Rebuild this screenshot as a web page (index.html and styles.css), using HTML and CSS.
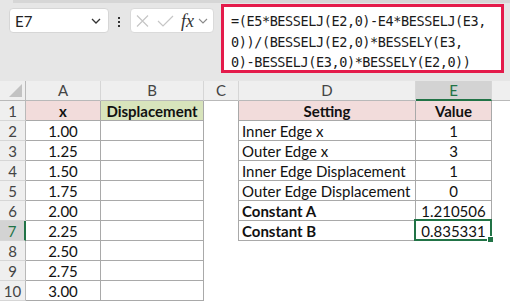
FILE: index.html
```html
<!DOCTYPE html>
<html>
<head>
<meta charset="utf-8">
<link rel="stylesheet" href="styles.css">
</head>
<body>
<div class="app">
  <div class="fbar">
    <div class="strip"></div>
    <div class="fbar-row">
      <div class="namebox">
        <span class="ref">E7</span>
        <svg class="chev" width="10" height="6" viewBox="0 0 10 6"><path d="M1 1 L5 5 L9 1" fill="none" stroke="#333" stroke-width="1.3"/></svg>
      </div>
      <div class="dots"><i></i><i></i><i></i></div>
      <div class="fxbox">
        <svg class="ic" width="13" height="12" viewBox="0 0 13 12"><path d="M1 0.5 L12 11.5 M12 0.5 L1 11.5" stroke="#c6c6c6" stroke-width="1.2" fill="none"/></svg>
        <svg class="ic ok" width="17" height="12" viewBox="0 0 17 12"><path d="M1 6 L6 11 L16 1" stroke="#c6c6c6" stroke-width="1.2" fill="none"/></svg>
        <span class="fx">fx</span>
        <svg class="chev2" width="10" height="6" viewBox="0 0 10 6"><path d="M1 1 L5 5 L9 1" fill="none" stroke="#8a8a8a" stroke-width="1.1"/></svg>
      </div>
      <div class="formula">=(E5*BESSELJ(E2,0)-E4*BESSELJ(E3,<br>0))/(BESSELJ(E2,0)*BESSELY(E3,<br>0)-BESSELJ(E3,0)*BESSELY(E2,0))</div>
    </div>
  </div>
  <div class="sheet">
    <div class="ch corner"><svg width="13" height="13" viewBox="0 0 13 13"><polygon points="13,0 13,13 0,13" fill="#c2c2c2"/></svg></div>
    <div class="ch">A</div><div class="ch">B</div><div class="ch">C</div><div class="ch">D</div><div class="ch selc">E</div><div class="ch last"></div>

    <div class="rh">1</div><div class="c t ctr pink b">x</div><div class="c t ctr green b">Displacement</div><div class="c lb"></div><div class="c t ctr pink b">Setting</div><div class="c t ctr pink b">Value</div><div class="c"></div>
    <div class="rh">2</div><div class="c t ctr">1.00</div><div class="c t"></div><div class="c lb"></div><div class="c t">Inner Edge x</div><div class="c t ctr">1</div><div class="c"></div>
    <div class="rh">3</div><div class="c t ctr">1.25</div><div class="c t"></div><div class="c lb"></div><div class="c t">Outer Edge x</div><div class="c t ctr">3</div><div class="c"></div>
    <div class="rh">4</div><div class="c t ctr">1.50</div><div class="c t"></div><div class="c lb"></div><div class="c t">Inner Edge Displacement</div><div class="c t ctr">1</div><div class="c"></div>
    <div class="rh">5</div><div class="c t ctr">1.75</div><div class="c t"></div><div class="c lb"></div><div class="c t">Outer Edge Displacement</div><div class="c t ctr">0</div><div class="c"></div>
    <div class="rh">6</div><div class="c t ctr">2.00</div><div class="c t"></div><div class="c lb"></div><div class="c t b">Constant A</div><div class="c t ctr">1.210506</div><div class="c"></div>
    <div class="rh selr">7</div><div class="c t ctr">2.25</div><div class="c t"></div><div class="c lb"></div><div class="c t b">Constant B</div><div class="c t ctr active">0.835331<span class="handle"></span></div><div class="c"></div>
    <div class="rh">8</div><div class="c t ctr">2.50</div><div class="c t"></div><div class="c"></div><div class="c"></div><div class="c"></div><div class="c"></div>
    <div class="rh">9</div><div class="c t ctr">2.75</div><div class="c t"></div><div class="c"></div><div class="c"></div><div class="c"></div><div class="c"></div>
    <div class="rh">10</div><div class="c t ctr">3.00</div><div class="c t"></div><div class="c"></div><div class="c"></div><div class="c"></div><div class="c"></div>
  </div>
</div>
</body>
</html>
```

FILE: styles.css
```css
* { box-sizing: border-box; }
html, body { margin: 0; padding: 0; background: #fff; }
body { font-family: Lato, "Liberation Sans", sans-serif; color: #111; }
.app { width: 510px; height: 302px; overflow: hidden; }

.fbar { height: 81px; background: #e6e6e6; }
.strip { height: 3px; margin-left: 13px; background: #d6d6d6; }
.fbar-row { display: flex; align-items: flex-start; padding-left: 9px; }

.namebox {
  margin-top: 5px; width: 100px; height: 25px; background: #fff;
  border: 1px solid #d6d6d6; border-radius: 4px;
  display: flex; align-items: center; justify-content: space-between;
  padding: 0 7px 0 5px;
}
.ref { font-size: 15px; color: #222; }
.dots { margin: 14px 0 0 9px; width: 3px; display: flex; flex-direction: column; gap: 2px; }
.dots i { display: block; width: 2px; height: 2px; background: #333; }
.fxbox {
  margin: 5px 0 0 9px; width: 84px; height: 25px; background: #fff;
  border: 1px solid #dadada; border-radius: 4px;
  display: flex; align-items: center; padding-left: 5px;
}
.ok { margin-left: 8px; }
.fx { font-family: "Liberation Serif", serif; font-style: italic; font-size: 18px; color: #333; margin-left: 7px; line-height: 1; }
.chev2 { margin-left: 4px; }

.formula {
  margin: 1px 0 0 7px; width: 283px; height: 69px; background: #fff;
  border: 3px solid #e41b4b;
  font-family: "DejaVu Sans Mono", monospace; font-size: 13.5px; line-height: 20.5px;
  color: #1a1a1a; padding: 4px 0 0 7px; white-space: nowrap; letter-spacing: -0.4px;
}

.sheet {
  display: grid;
  grid-template-columns: 26px 75px 103px 35px 177px 76px 18px;
  grid-auto-rows: 20px;
  font-size: 15px;
}
.ch {
  background: #efefef; border-right: 1px solid #d6d6d6; border-bottom: 1px solid #b9b9b9;
  text-align: center; line-height: 19px; color: #444;
}
.ch.last { border-right: none; }
.corner { display: flex; align-items: flex-end; justify-content: flex-end; padding: 0 3px 3px 0; border-right-color: #b9b9b9; }
.selc { background: #d3d3d3; color: #217346; border-bottom: 2px solid #217346; }
.rh {
  background: #efefef; border-right: 1px solid #b9b9b9; border-bottom: 1px solid #d6d6d6;
  text-align: center; line-height: 20px; color: #444;
}
.selr { background: #d3d3d3; color: #217346; border-right: 2px solid #217346; }
.c { padding: 0 3px; line-height: 20px; white-space: nowrap; overflow: visible; color: #111; }
.t { border-right: 1px solid #a9a9a9; border-bottom: 1px solid #a9a9a9; }
.lb { border-right: 1px solid #a9a9a9; }
.ctr { text-align: center; }
.b { font-weight: 700; }
.pink { background: #f2dcdb; }
.green { background: #d8e4bc; }
.active { position: relative; }
.active::after {
  content: ""; position: absolute; left: -2px; top: -2px; right: -1px; bottom: -1px;
  border: 2px solid #217346;
}
.handle {
  position: absolute; right: -2px; bottom: -2px; width: 5px; height: 5px;
  background: #217346; z-index: 2; outline: 1px solid #fff;
}
```
